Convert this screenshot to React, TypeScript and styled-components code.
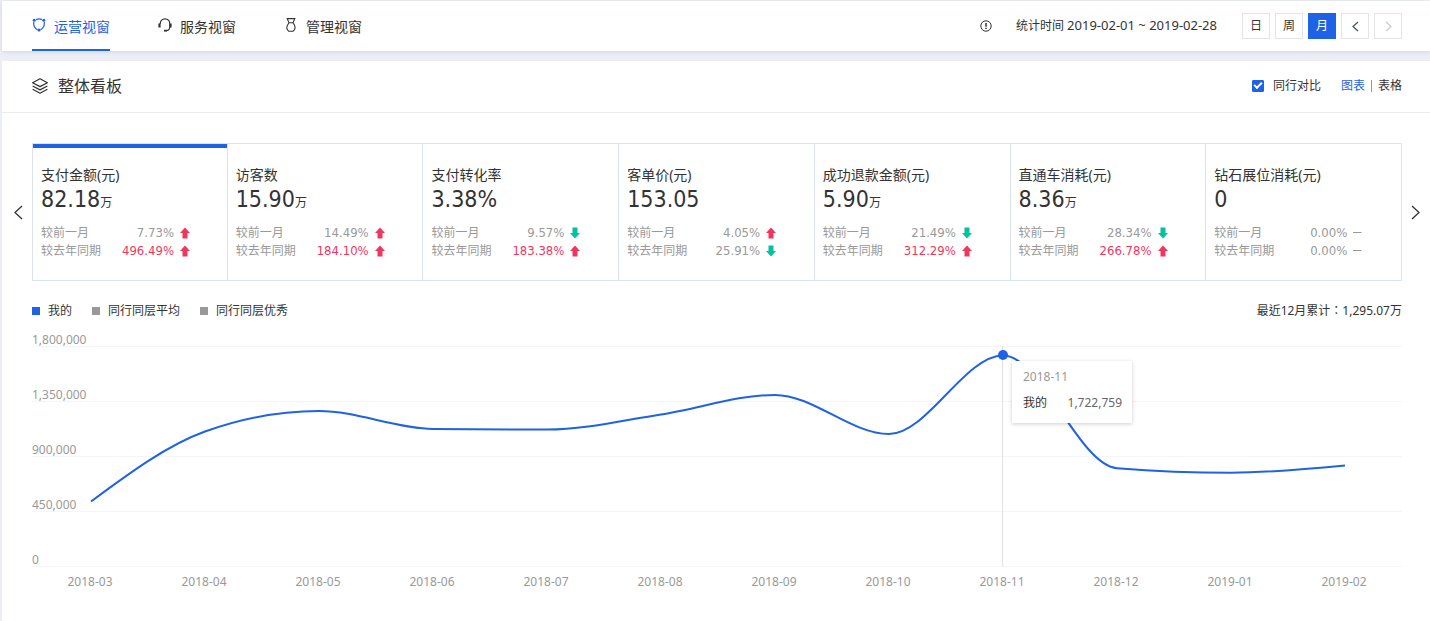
import React from "react";
import styled, { createGlobalStyle } from "styled-components";

const GlobalStyle = createGlobalStyle`
  *, *::before, *::after { box-sizing: border-box; }
  body {
    margin: 0;
    background: #ebeef4;
    color: #333;
    font: 12px/18px "Noto Sans", "Noto Sans CJK SC", sans-serif;
  }
  button { font: inherit; color: inherit; padding: 0; margin: 0; background: none; border: 0; cursor: pointer; }
  a { color: inherit; text-decoration: none; }
  svg { display: block; }
`;

const BLUE = "#1f62e6";
const LINE = "#dbe4ec";
const FIGURES = `"DejaVu Sans Condensed", "Noto Sans", "Noto Sans CJK SC", sans-serif`;

const Page = styled.div`
  display: flex;
  flex-direction: column;
  gap: 10px;
  padding: 1px 0 0 2px;
  min-height: 100vh;
`;

const TopBar = styled.header`
  display: flex;
  justify-content: space-between;
  align-items: center;
  height: 50px;
  padding: 0 28px 0 30px;
  background: #fff;
  box-shadow: 0 1px 4px rgba(0, 0, 0, 0.1);
`;

const Tabs = styled.nav`
  display: flex;
  gap: 48px;
  height: 100%;
`;

const Tab = styled.a<{ $active?: boolean }>`
  display: flex;
  align-items: center;
  gap: 8px;
  font-size: 14px;
  padding-top: 4px;
  color: ${(p) => (p.$active ? BLUE : "#333")};
  border-bottom: 2px solid ${(p) => (p.$active ? BLUE : "transparent")};
  svg { margin-bottom: 4px; }
`;

const Period = styled.div`
  display: flex;
  align-items: center;
`;

const DateRange = styled.span`
  margin: 0 25px 0 24px;
  padding-bottom: 2px;
  white-space: nowrap;
  time { font-size: 13px; }
`;

const ButtonGroup = styled.div`
  display: flex;
  gap: 5px;
`;

const PeriodButton = styled.button<{ $active?: boolean }>`
  && {
    display: flex;
    align-items: center;
    justify-content: center;
    width: 28px;
    height: 26px;
    border: 1px solid ${(p) => (p.$active ? BLUE : "#e3e4e6")};
    background: ${(p) => (p.$active ? BLUE : "#fff")};
    color: ${(p) => (p.$active ? "#fff" : "#333")};
  }
`;

const Panel = styled.main`
  flex: 1;
  background: #fff;
`;

const PanelHeader = styled.div`
  display: flex;
  align-items: center;
  justify-content: space-between;
  height: 52px;
  padding: 0 28px 2px 30px;
  border-bottom: 1px solid #ebecee;
`;

const Title = styled.h1`
  display: flex;
  align-items: center;
  gap: 10px;
  margin: 0;
  font-size: 16px;
  font-weight: 400;
  line-height: 24px;
`;

const Options = styled.div`
  display: flex;
  align-items: center;
  gap: 20px;
`;

const CompareLabel = styled.label`
  display: flex;
  align-items: center;
  gap: 9px;
`;

const Checkbox = styled.input`
  appearance: none;
  width: 12px;
  height: 12px;
  margin: 0;
  border-radius: 1px;
  border: 1px solid ${BLUE};
  display: grid;
  place-items: center;
  &:checked { background: ${BLUE}; }
  &:checked::after {
    content: "";
    width: 8px;
    height: 5px;
    border: solid #fff;
    border-width: 0 0 2px 2px;
    transform: translateY(-1px) rotate(-45deg);
  }
`;

const ViewSwitch = styled.div`
  display: flex;
  align-items: center;
  gap: 6px;
`;

const ViewLink = styled.a<{ $active?: boolean }>`
  color: ${(p) => (p.$active ? BLUE : "#333")};
`;

const Divider = styled.span`
  width: 1px;
  height: 12px;
  background: #8fa08f;
`;

const Carousel = styled.section`
  display: flex;
  align-items: center;
  padding-top: 30px;
`;

const SlideButton = styled.button<{ $side: "left" | "right" }>`
  && {
    display: flex;
    flex: none;
    align-items: center;
    justify-content: center;
    width: ${(p) => (p.$side === "left" ? 30 : 28)}px;
    height: 40px;
    padding-${(p) => p.$side}: 2px;
  }
`;

const Cards = styled.div`
  flex: 1;
  display: grid;
  grid-template-columns: repeat(7, 1fr);
  border: solid ${LINE};
  border-width: 1px 0;
`;

const Card = styled.article<{ $active?: boolean }>`
  height: 136px;
  padding: 0 8px;
  border-right: 1px solid ${LINE};
  &:first-child { border-left: 1px solid ${LINE}; }
  &::before {
    content: "";
    display: block;
    height: 4px;
    margin: 0 -8px 17px;
    background: ${(p) => (p.$active ? BLUE : "transparent")};
  }
`;

const CardName = styled.h2`
  margin: 0;
  font-size: 14px;
  font-weight: 400;
  line-height: 20px;
  white-space: nowrap;
`;

const Amount = styled.div`
  height: 28px;
  font-family: ${FIGURES};
  font-size: 23px;
  line-height: 28px;
  small { font-size: 12px; }
`;

const CompareList = styled.div`
  padding-top: 11px;
`;

const Compare = styled.div`
  display: flex;
  align-items: center;
  width: 149px;
  height: 18px;
  color: #999;
  svg { margin-left: 6px; }
`;

const Rate = styled.span<{ $hot?: boolean }>`
  margin-left: auto;
  font-family: ${FIGURES};
  font-size: 13px;
  color: ${(p) => (p.$hot ? "#f0365f" : "#999")};
`;

const ChartSection = styled.section`
  padding: 20px 28px 0 30px;
`;

const ChartHead = styled.div`
  display: flex;
  justify-content: space-between;
  align-items: center;
  height: 20px;
`;

const Legend = styled.ul`
  display: flex;
  gap: 20px;
  margin: 0;
  padding: 0;
  list-style: none;
`;

const LegendItem = styled.li<{ $color: string }>`
  display: flex;
  align-items: center;
  gap: 8px;
  &::before {
    content: "";
    width: 8px;
    height: 8px;
    background: ${(p) => p.$color};
  }
`;

const Total = styled.span`
  font-family: "Noto Sans", "Noto Sans CJK TC", sans-serif;
`;

const Plot = styled.div`
  position: relative;
  padding-top: 10px;
`;

const GridRow = styled.div`
  display: flex;
  align-items: flex-end;
  height: 55px;
  line-height: 12px;
  color: #999;
  border-bottom: 1px solid #f4f5f9;
  &:first-child { height: 16px; }
`;

const Overlay = styled.div`
  position: absolute;
  inset: 25px 0 0 2px;
  height: 220px;
`;

const Curve = styled.svg`
  width: 100%;
  height: 220px;
  overflow: visible;
`;

const Guide = styled.div`
  position: absolute;
  top: 0;
  bottom: 0;
  width: 1px;
  margin-left: -1px;
  background: #e2e2e4;
`;

const Dot = styled.div`
  position: absolute;
  width: 10px;
  height: 10px;
  margin: -5px 0 0 -5px;
  border-radius: 50%;
  background: ${BLUE};
`;

const Tooltip = styled.div`
  position: absolute;
  width: 120px;
  height: 62px;
  margin: 6px 0 0 9px;
  padding: 7px 10px 0 11px;
  background: #fff;
  box-shadow: 0 1px 4px rgba(0, 0, 0, 0.2);
  color: #999;
`;

const TooltipRow = styled.div`
  display: flex;
  justify-content: space-between;
  margin-top: 8px;
  color: #666;
  span:first-child { color: #333; }
`;

const Months = styled.div`
  display: grid;
  grid-template-columns: repeat(12, 1fr);
  padding: 6px 1px 0;
  color: #999;
  text-align: center;
`;

type Trend = "up" | "down" | "flat";
type Row = [string, Trend, boolean?];

const CARDS: { name: string; amount: string; unit?: string; month: Row; year: Row }[] = [
  { name: "支付金额(元)", amount: "82.18", unit: "万", month: ["7.73%", "up"], year: ["496.49%", "up", true] },
  { name: "访客数", amount: "15.90", unit: "万", month: ["14.49%", "up"], year: ["184.10%", "up", true] },
  { name: "支付转化率", amount: "3.38%", month: ["9.57%", "down"], year: ["183.38%", "up", true] },
  { name: "客单价(元)", amount: "153.05", month: ["4.05%", "up"], year: ["25.91%", "down"] },
  { name: "成功退款金额(元)", amount: "5.90", unit: "万", month: ["21.49%", "down"], year: ["312.29%", "up", true] },
  { name: "直通车消耗(元)", amount: "8.36", unit: "万", month: ["28.34%", "down"], year: ["266.78%", "up", true] },
  { name: "钻石展位消耗(元)", amount: "0", month: ["0.00%", "flat"], year: ["0.00%", "flat"] },
];

const SERIES: [string, number][] = [
  ["2018-03", 528000],
  ["2018-04", 1100000],
  ["2018-05", 1268000],
  ["2018-06", 1121000],
  ["2018-07", 1116000],
  ["2018-08", 1240000],
  ["2018-09", 1400000],
  ["2018-10", 1080000],
  ["2018-11", 1722759],
  ["2018-12", 800000],
  ["2019-01", 763000],
  ["2019-02", 822000],
];

const MAX = 1800000;
const TICKS = ["1,800,000", "1,350,000", "900,000", "450,000", "0"];
const ACTIVE = 8;

const points = SERIES.map(([, v], i) => [57 + i * 114, 220 - (v / MAX) * 220]);

// Monotone cubic interpolation, so the curve never overshoots a data point.
function monotonePath(p: number[][]) {
  const n = p.length;
  const slope = (i: number) => (p[i + 1][1] - p[i][1]) / (p[i + 1][0] - p[i][0]);
  const t: number[] = [];
  for (let i = 1; i < n - 1; i++) {
    const a = slope(i - 1);
    const b = slope(i);
    t[i] = (Math.sign(a) + Math.sign(b)) * Math.min(Math.abs(a), Math.abs(b), 0.25 * Math.abs(a + b)) || 0;
  }
  t[0] = (3 * slope(0) - t[1]) / 2;
  t[n - 1] = (3 * slope(n - 2) - t[n - 2]) / 2;
  let d = `M${p[0][0]},${p[0][1]}`;
  for (let i = 0; i < n - 1; i++) {
    const dx = (p[i + 1][0] - p[i][0]) / 3;
    d += `C${p[i][0] + dx},${p[i][1] + dx * t[i]} ${p[i + 1][0] - dx},${p[i + 1][1] - dx * t[i + 1]} ${p[i + 1][0]},${p[i + 1][1]}`;
  }
  return d;
}

const TrendIcon = ({ trend }: { trend: Trend }) => (
  <svg width="10" height="12" viewBox="0 0 10 12" aria-hidden="true">
    {trend === "up" && <path d="M5 0.5L10 6H7.5V11.5H2.5V6H0Z" fill="#f0365f" />}
    {trend === "down" && <path d="M5 11.5L10 6H7.5V0.5H2.5V6H0Z" fill="#00c2a0" />}
    {trend === "flat" && <path d="M0 5.5H8.5" stroke="#999" />}
  </svg>
);

const Chevron = ({ dir, w = 6, h = 10, color }: { dir: "left" | "right"; w?: number; h?: number; color: string }) => (
  <svg width={w + 2} height={h + 2} viewBox={`-1 -1 ${w + 2} ${h + 2}`} fill="none" stroke={color} strokeWidth="1.3" aria-hidden="true">
    <path d={dir === "left" ? `M${w} 0L0 ${h / 2}L${w} ${h}` : `M0 0L${w} ${h / 2}L0 ${h}`} />
  </svg>
);

const NetworkIcon = () => (
  <svg width="14" height="14" viewBox="0 0 14 14" fill="none" stroke="currentColor" strokeWidth="1.2" aria-hidden="true">
    <path d="M4 1.6Q7 0.2 10 1.6M12.2 4Q13 9 8.500 11.800M5.500 11.800Q1 9 1.800 4" />
    <g fill="currentColor" stroke="none">
      <circle cx="2.2" cy="2.3" r="1.5" />
      <circle cx="11.800" cy="2.3" r="1.5" />
      <circle cx="7" cy="12" r="1.6" />
    </g>
  </svg>
);

const HeadsetIcon = () => (
  <svg width="14" height="14" viewBox="0 0 14 14" fill="none" stroke="currentColor" strokeWidth="1.2" aria-hidden="true">
    <path d="M2.200 6V5.500A4.800 4.700 0 0 1 11.800 5.500V9Q11.800 12 8.500 12.700" />
    <path d="M1.500 5.500V9.500M12.500 5.500V9.500" strokeWidth="2.200" />
    <path d="M6 12.700H9" strokeWidth="1.800" />
  </svg>
);

const MedalIcon = () => (
  <svg width="14" height="14" viewBox="0 0 14 14" fill="none" stroke="currentColor" strokeWidth="1.1" aria-hidden="true">
    <path d="M3.200 0.600H10.800L9 4.800H5ZM5 4.800L3.600 7Q1.600 10.500 4.600 13.200H9.200Q12.200 10.500 10.400 7L9 4.800" />
  </svg>
);

const LayersIcon = () => (
  <svg width="16" height="16" viewBox="0 0 16 16" fill="none" stroke="#333" strokeWidth="1.2" strokeLinejoin="round" aria-hidden="true">
    <path d="M8 0.800L15.400 4.700L8 8.600L0.600 4.700ZM0.600 8L8 11.900L15.400 8M0.600 11.300L8 15.200L15.400 11.300" />
  </svg>
);

const InfoIcon = () => (
  <svg width="12" height="12" viewBox="0 0 12 12" fill="none" stroke="#333" aria-hidden="true">
    <circle cx="6" cy="6" r="5.200" />
    <path d="M6 3V6.800M6 7.800V9" strokeWidth="1.500" />
  </svg>
);

const CompareRow = ({ label, row: [rate, trend, hot] }: { label: string; row: Row }) => (
  <Compare>
    <span>{label}</span>
    <Rate $hot={hot}>{rate}</Rate>
    <TrendIcon trend={trend} />
  </Compare>
);

export default function App() {
  const activeLeft = `${(points[ACTIVE][0] / 1368) * 100}%`;
  const activeTop = points[ACTIVE][1];
  return (
    <>
      <GlobalStyle />
      <Page>
        <TopBar>
          <Tabs>
            <Tab href="#operation" $active><NetworkIcon />运营视窗</Tab>
            <Tab href="#service"><HeadsetIcon />服务视窗</Tab>
            <Tab href="#management"><MedalIcon />管理视窗</Tab>
          </Tabs>
          <Period>
            <InfoIcon />
            <DateRange>统计时间 <time>2019-02-01 ~ 2019-02-28</time></DateRange>
            <ButtonGroup>
              <PeriodButton>日</PeriodButton>
              <PeriodButton>周</PeriodButton>
              <PeriodButton $active>月</PeriodButton>
              <PeriodButton aria-label="上一月"><Chevron dir="left" w={5} h={9} color="#456" /></PeriodButton>
              <PeriodButton aria-label="下一月"><Chevron dir="right" w={5} h={9} color="#ccc" /></PeriodButton>
            </ButtonGroup>
          </Period>
        </TopBar>
        <Panel>
          <PanelHeader>
            <Title><LayersIcon />整体看板</Title>
            <Options>
              <CompareLabel>
                <Checkbox type="checkbox" defaultChecked />
                同行对比
              </CompareLabel>
              <ViewSwitch>
                <ViewLink href="#chart" $active>图表</ViewLink>
                <Divider />
                <ViewLink href="#table">表格</ViewLink>
              </ViewSwitch>
            </Options>
          </PanelHeader>
          <Carousel>
            <SlideButton $side="left" aria-label="上一组"><Chevron dir="left" w={7} h={13} color="#333" /></SlideButton>
            <Cards>
              {CARDS.map((c, i) => (
                <Card key={c.name} $active={i === 0}>
                  <CardName>{c.name}</CardName>
                  <Amount>{c.amount}{c.unit && <small>{c.unit}</small>}</Amount>
                  <CompareList>
                    <CompareRow label="较前一月" row={c.month} />
                    <CompareRow label="较去年同期" row={c.year} />
                  </CompareList>
                </Card>
              ))}
            </Cards>
            <SlideButton $side="right" aria-label="下一组"><Chevron dir="right" w={7} h={13} color="#333" /></SlideButton>
          </Carousel>
          <ChartSection>
            <ChartHead>
              <Legend>
                <LegendItem $color={BLUE}>我的</LegendItem>
                <LegendItem $color="#999">同行同层平均</LegendItem>
                <LegendItem $color="#999">同行同层优秀</LegendItem>
              </Legend>
              <Total>最近12月累计：1,295.07万</Total>
            </ChartHead>
            <Plot>
              {TICKS.map((t) => <GridRow key={t}>{t}</GridRow>)}
              <Overlay>
                <Guide style={{ left: activeLeft }} />
                <Curve viewBox="0 0 1368 220" preserveAspectRatio="none" role="img" aria-label="支付金额">
                  <path d={monotonePath(points)} fill="none" stroke={BLUE} strokeWidth="2" vectorEffect="non-scaling-stroke" />
                </Curve>
                <Dot style={{ left: activeLeft, top: activeTop }} />
                <Tooltip style={{ left: activeLeft, top: activeTop }}>
                  2018-11
                  <TooltipRow><span>我的</span><span>1,722,759</span></TooltipRow>
                </Tooltip>
              </Overlay>
            </Plot>
            <Months>
              {SERIES.map(([m]) => <span key={m}>{m}</span>)}
            </Months>
          </ChartSection>
        </Panel>
      </Page>
    </>
  );
}
